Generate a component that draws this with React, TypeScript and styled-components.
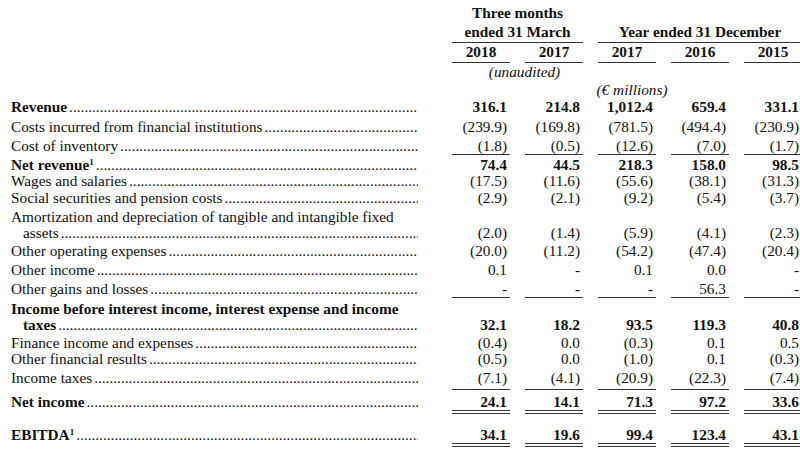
import React from "react";
import styled, { createGlobalStyle } from "styled-components";

const Global = createGlobalStyle`
  html, body { margin: 0; padding: 0; background: #ffffff; }
  body {
    font-family: "Liberation Serif", "Times New Roman", serif;
    font-size: 15.3px;
    color: #111111;
  }
`;

type Rule = "single" | "double" | undefined;

const Table = styled.div`
  width: 800px;
  box-sizing: border-box;
  padding-left: 11px;
`;

const Row = styled.div<{ $pt?: number }>`
  display: grid;
  grid-template-columns: 426px repeat(5, 58px);
  column-gap: 15px;
  align-items: start;
  padding-top: ${(p) => p.$pt ?? 0}px;
  line-height: 16px;
`;

const GroupHead = styled.div<{ $span: number }>`
  grid-column: span ${(p) => p.$span};
  align-self: end;
  text-align: center;
  font-weight: bold;
  line-height: 19px;
  padding-bottom: 1px;
  border-bottom: 1px solid #333;
`;

const YearCell = styled.div`
  text-align: center;
  font-weight: bold;
  padding: 1px 0 2px;
  border-bottom: 1px solid #333;
`;

const Note = styled.div<{ $span: number; $shift: number }>`
  grid-column: span ${(p) => p.$span};
  text-align: center;
  font-style: italic;
  padding-left: ${(p) => p.$shift}px;
`;

const LabelCell = styled.div<{ $bold?: boolean }>`
  padding-right: 19px;
  font-weight: ${(p) => (p.$bold ? "bold" : "normal")};
  white-space: nowrap;
`;

const LabelLine = styled.div<{ $indent?: boolean }>`
  display: flex;
  padding-left: ${(p) => (p.$indent ? 12 : 0)}px;
`;

const LabelText = styled.span`
  flex: none;
`;

const Sup = styled.sup`
  font-size: 9px;
  line-height: 0;
  vertical-align: 5px;
`;

const Leader = styled.span`
  flex: 1;
  overflow: hidden;
  margin-left: 2px;
  font-weight: normal;
  &::after {
    content: "................................................................................................................................................";
  }
`;

const NumCell = styled.div<{ $bold?: boolean; $rule?: Rule; $pb?: number }>`
  align-self: end;
  text-align: right;
  padding-right: 3px;
  padding-bottom: ${(p) => p.$pb ?? 0}px;
  font-weight: ${(p) => (p.$bold ? "bold" : "normal")};
  border-bottom: ${(p) =>
    p.$rule === "double"
      ? "4px double #333"
      : p.$rule === "single"
      ? "1px solid #333"
      : "none"};
`;

type Line = {
  label: string[];
  sup?: boolean;
  bold?: boolean;
  values: string[];
  pt: number;
  pb?: number;
  rule?: Rule;
};

const lines: Line[] = [
  { label: ["Revenue"], bold: true, values: ["316.1", "214.8", "1,012.4", "659.4", "331.1"], pt: 1 },
  { label: ["Costs incurred from financial institutions"], values: ["(239.9)", "(169.8)", "(781.5)", "(494.4)", "(230.9)"], pt: 4 },
  { label: ["Cost of inventory"], values: ["(1.8)", "(0.5)", "(12.6)", "(7.0)", "(1.7)"], pt: 3, rule: "single" },
  { label: ["Net revenue"], sup: true, bold: true, values: ["74.4", "44.5", "218.3", "158.0", "98.5"], pt: 2 },
  { label: ["Wages and salaries"], values: ["(17.5)", "(11.6)", "(55.6)", "(38.1)", "(31.3)"], pt: 0 },
  { label: ["Social securities and pension costs"], values: ["(2.9)", "(2.1)", "(9.2)", "(5.4)", "(3.7)"], pt: 1 },
  { label: ["Amortization and depreciation of tangible and intangible fixed", "assets"], values: ["(2.0)", "(1.4)", "(5.9)", "(4.1)", "(2.3)"], pt: 3 },
  { label: ["Other operating expenses"], values: ["(20.0)", "(11.2)", "(54.2)", "(47.4)", "(20.4)"], pt: 2 },
  { label: ["Other income"], values: ["0.1", "-", "0.1", "0.0", "-"], pt: 3 },
  { label: ["Other gains and losses"], values: ["-", "-", "-", "56.3", "-"], pt: 3, rule: "single" },
  { label: ["Income before interest income, interest expense and income", "taxes"], bold: true, values: ["32.1", "18.2", "93.5", "119.3", "40.8"], pt: 3 },
  { label: ["Finance income and expenses"], values: ["(0.4)", "0.0", "(0.3)", "0.1", "0.5"], pt: 2 },
  { label: ["Other financial results"], values: ["(0.5)", "0.0", "(1.0)", "0.1", "(0.3)"], pt: 0 },
  { label: ["Income taxes"], values: ["(7.1)", "(4.1)", "(20.9)", "(22.3)", "(7.4)"], pt: 3, pb: 3, rule: "single" },
  { label: ["Net income"], bold: true, values: ["24.1", "14.1", "71.3", "97.2", "33.6"], pt: 4, rule: "double" },
  { label: ["EBITDA"], sup: true, bold: true, values: ["34.1", "19.6", "99.4", "123.4", "43.1"], pt: 13, rule: "double" },
];

const Label: React.FC<{ line: Line }> = ({ line }) => {
  const parts = line.label;
  const last = parts.length - 1;
  return (
    <LabelCell $bold={line.bold}>
      {parts.slice(0, last).map((t) => (
        <LabelLine key={t}>
          <LabelText>{t}</LabelText>
        </LabelLine>
      ))}
      <LabelLine $indent={last > 0}>
        <LabelText>
          {parts[last]}
          {line.sup && <Sup>1</Sup>}
        </LabelText>
        <Leader />
      </LabelLine>
    </LabelCell>
  );
};

export default function App() {
  return (
    <>
      <Global />
      <Table>
        <Row $pt={3}>
          <div />
          <GroupHead $span={2}>
            Three months
            <br />
            ended 31 March
          </GroupHead>
          <GroupHead $span={3}>Year ended 31 December</GroupHead>
        </Row>
        <Row $pt={0}>
          <div />
          {["2018", "2017", "2017", "2016", "2015"].map((y, i) => (
            <YearCell key={i}>{y}</YearCell>
          ))}
        </Row>
        <Row $pt={1}>
          <div />
          <Note $span={2} $shift={14}>(unaudited)</Note>
        </Row>
        <Row $pt={2}>
          <div />
          <Note $span={5} $shift={10}>(€ millions)</Note>
        </Row>
        {lines.map((line) => (
          <Row key={line.label[0]} $pt={line.pt}>
            <Label line={line} />
            {line.values.map((v, i) => (
              <NumCell key={i} $bold={line.bold} $rule={line.rule} $pb={line.pb}>
                {v}
              </NumCell>
            ))}
          </Row>
        ))}
      </Table>
    </>
  );
}
